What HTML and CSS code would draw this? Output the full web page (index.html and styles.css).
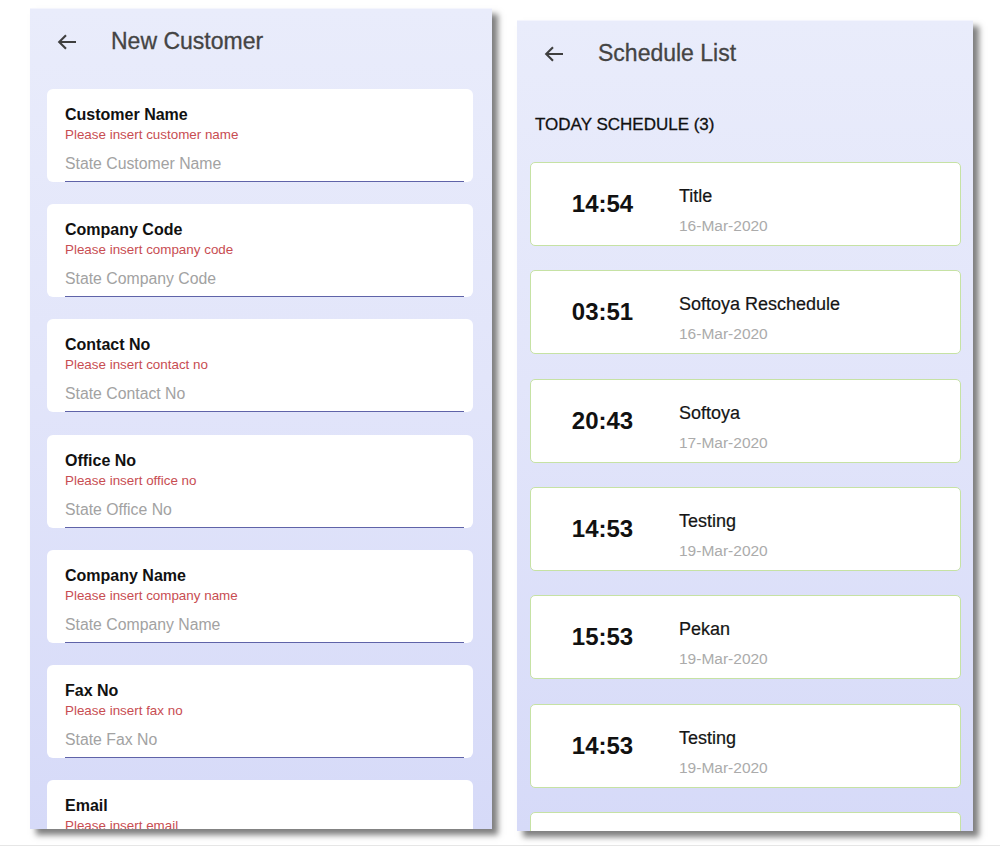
FILE: index.html
```html
<!DOCTYPE html>
<html>
<head>
<meta charset="utf-8">
<link rel="stylesheet" href="styles.css">
</head>
<body>
<div class="stage">
  <div class="phone phone-left">
    <div class="header">
      <svg class="back" width="20" height="16" viewBox="0 0 20 16"><path d="M19 8H2.5M9 1.2L2.2 8L9 14.8" fill="none" stroke="#3f3f3f" stroke-width="2.1"/></svg>
      <span class="title">New Customer</span>
    </div>
    <div class="form">
      <div class="field"><div class="label">Customer Name</div><div class="error">Please insert customer name</div><div class="input">State Customer Name</div></div>
      <div class="field"><div class="label">Company Code</div><div class="error">Please insert company code</div><div class="input">State Company Code</div></div>
      <div class="field"><div class="label">Contact No</div><div class="error">Please insert contact no</div><div class="input">State Contact No</div></div>
      <div class="field"><div class="label">Office No</div><div class="error">Please insert office no</div><div class="input">State Office No</div></div>
      <div class="field"><div class="label">Company Name</div><div class="error">Please insert company name</div><div class="input">State Company Name</div></div>
      <div class="field"><div class="label">Fax No</div><div class="error">Please insert fax no</div><div class="input">State Fax No</div></div>
      <div class="field"><div class="label">Email</div><div class="error">Please insert email</div><div class="input">State Email</div></div>
    </div>
  </div>
  <div class="phone phone-right">
    <div class="header">
      <svg class="back" width="20" height="16" viewBox="0 0 20 16"><path d="M19 8H2.5M9 1.2L2.2 8L9 14.8" fill="none" stroke="#3f3f3f" stroke-width="2.1"/></svg>
      <span class="title">Schedule List</span>
    </div>
    <div class="section">TODAY SCHEDULE (3)</div>
    <div class="list">
      <div class="item"><div class="time">14:54</div><div class="info"><div class="name">Title</div><div class="date">16-Mar-2020</div></div></div>
      <div class="item"><div class="time">03:51</div><div class="info"><div class="name">Softoya Reschedule</div><div class="date">16-Mar-2020</div></div></div>
      <div class="item"><div class="time">20:43</div><div class="info"><div class="name">Softoya</div><div class="date">17-Mar-2020</div></div></div>
      <div class="item"><div class="time">14:53</div><div class="info"><div class="name">Testing</div><div class="date">19-Mar-2020</div></div></div>
      <div class="item"><div class="time">15:53</div><div class="info"><div class="name">Pekan</div><div class="date">19-Mar-2020</div></div></div>
      <div class="item"><div class="time">14:53</div><div class="info"><div class="name">Testing</div><div class="date">19-Mar-2020</div></div></div>
      <div class="item"><div class="time">10:00</div><div class="info"><div class="name">Testing</div><div class="date">20-Mar-2020</div></div></div>
    </div>
  </div>
</div>
<div class="rule"></div>
</body>
</html>
```

FILE: styles.css
```css
html, body {
  margin: 0;
  padding: 0;
  background: #ffffff;
  width: 1000px;
  height: 848px;
  overflow: hidden;
  font-family: "Liberation Sans", Arial, sans-serif;
}

.stage {
  display: flex;
  align-items: flex-start;
  padding-left: 30px;
  height: 845px;
  box-sizing: border-box;
}

.rule {
  height: 1px;
  background: #e6e6e6;
}

.phone {
  overflow: hidden;
  background: linear-gradient(180deg, #e9ecfb 0%, #e2e5fa 45%, #d6daf8 100%);
  box-shadow: 6px 6px 6px rgba(0, 0, 0, 0.5);
  border-top: 1px solid #f4f5fd;
  box-sizing: border-box;
}

.phone-left {
  margin-top: 8px;
  width: 462px;
  height: 821px;
}

.phone-right {
  margin-top: 20px;
  margin-left: 25px;
  width: 456px;
  height: 811px;
}

.header {
  display: flex;
  align-items: center;
  height: 65px;
  padding-left: 27px;
}

.back {
  flex: none;
}

.title {
  margin-left: 34px;
  font-size: 23px;
  color: #444444;
  -webkit-text-stroke: 0.3px #444444;
}

/* form */
.form {
  display: flex;
  flex-direction: column;
  gap: 22.2px;
  margin-top: 15px;
  padding: 0 19px 0 17px;
}

.field {
  background: #ffffff;
  border-radius: 6px;
  height: 93px;
  box-sizing: border-box;
  padding: 17px 9px 0 18px;
  display: flex;
  flex-direction: column;
  flex: none;
}

.label {
  font-size: 16px;
  line-height: 18px;
  font-weight: 700;
  color: #111111;
}

.error {
  margin-top: 2px;
  font-size: 13.4px;
  line-height: 17px;
  color: #c84d52;
}

.input {
  font-size: 15.8px;
  line-height: 20px;
  color: #a2a2a2;
  padding: 11px 0 7px;
  border-bottom: 1px solid #5f63a8;
}

/* schedule */
.section {
  margin-top: 29px;
  padding-left: 18px;
  font-size: 17px;
  line-height: 20px;
  color: #111111;
  -webkit-text-stroke: 0.3px #111111;
}

.list {
  display: flex;
  flex-direction: column;
  gap: 24.33px;
  margin-top: 27px;
  padding: 0 12px 0 13px;
}

.item {
  flex: none;
  height: 84px;
  box-sizing: border-box;
  background: #ffffff;
  border: 1px solid #c6e2a4;
  border-radius: 5px;
  display: flex;
  align-items: center;
}

.time {
  width: 143px;
  text-align: center;
  font-size: 24px;
  font-weight: 700;
  color: #111111;
  flex: none;
}

.info {
  margin-left: 5px;
  padding-top: 14px;
}

.name {
  font-size: 18px;
  line-height: 20px;
  color: #151515;
  -webkit-text-stroke: 0.2px #151515;
}

.date {
  margin-top: 10px;
  font-size: 15.5px;
  line-height: 20px;
  color: #ababab;
}
```
